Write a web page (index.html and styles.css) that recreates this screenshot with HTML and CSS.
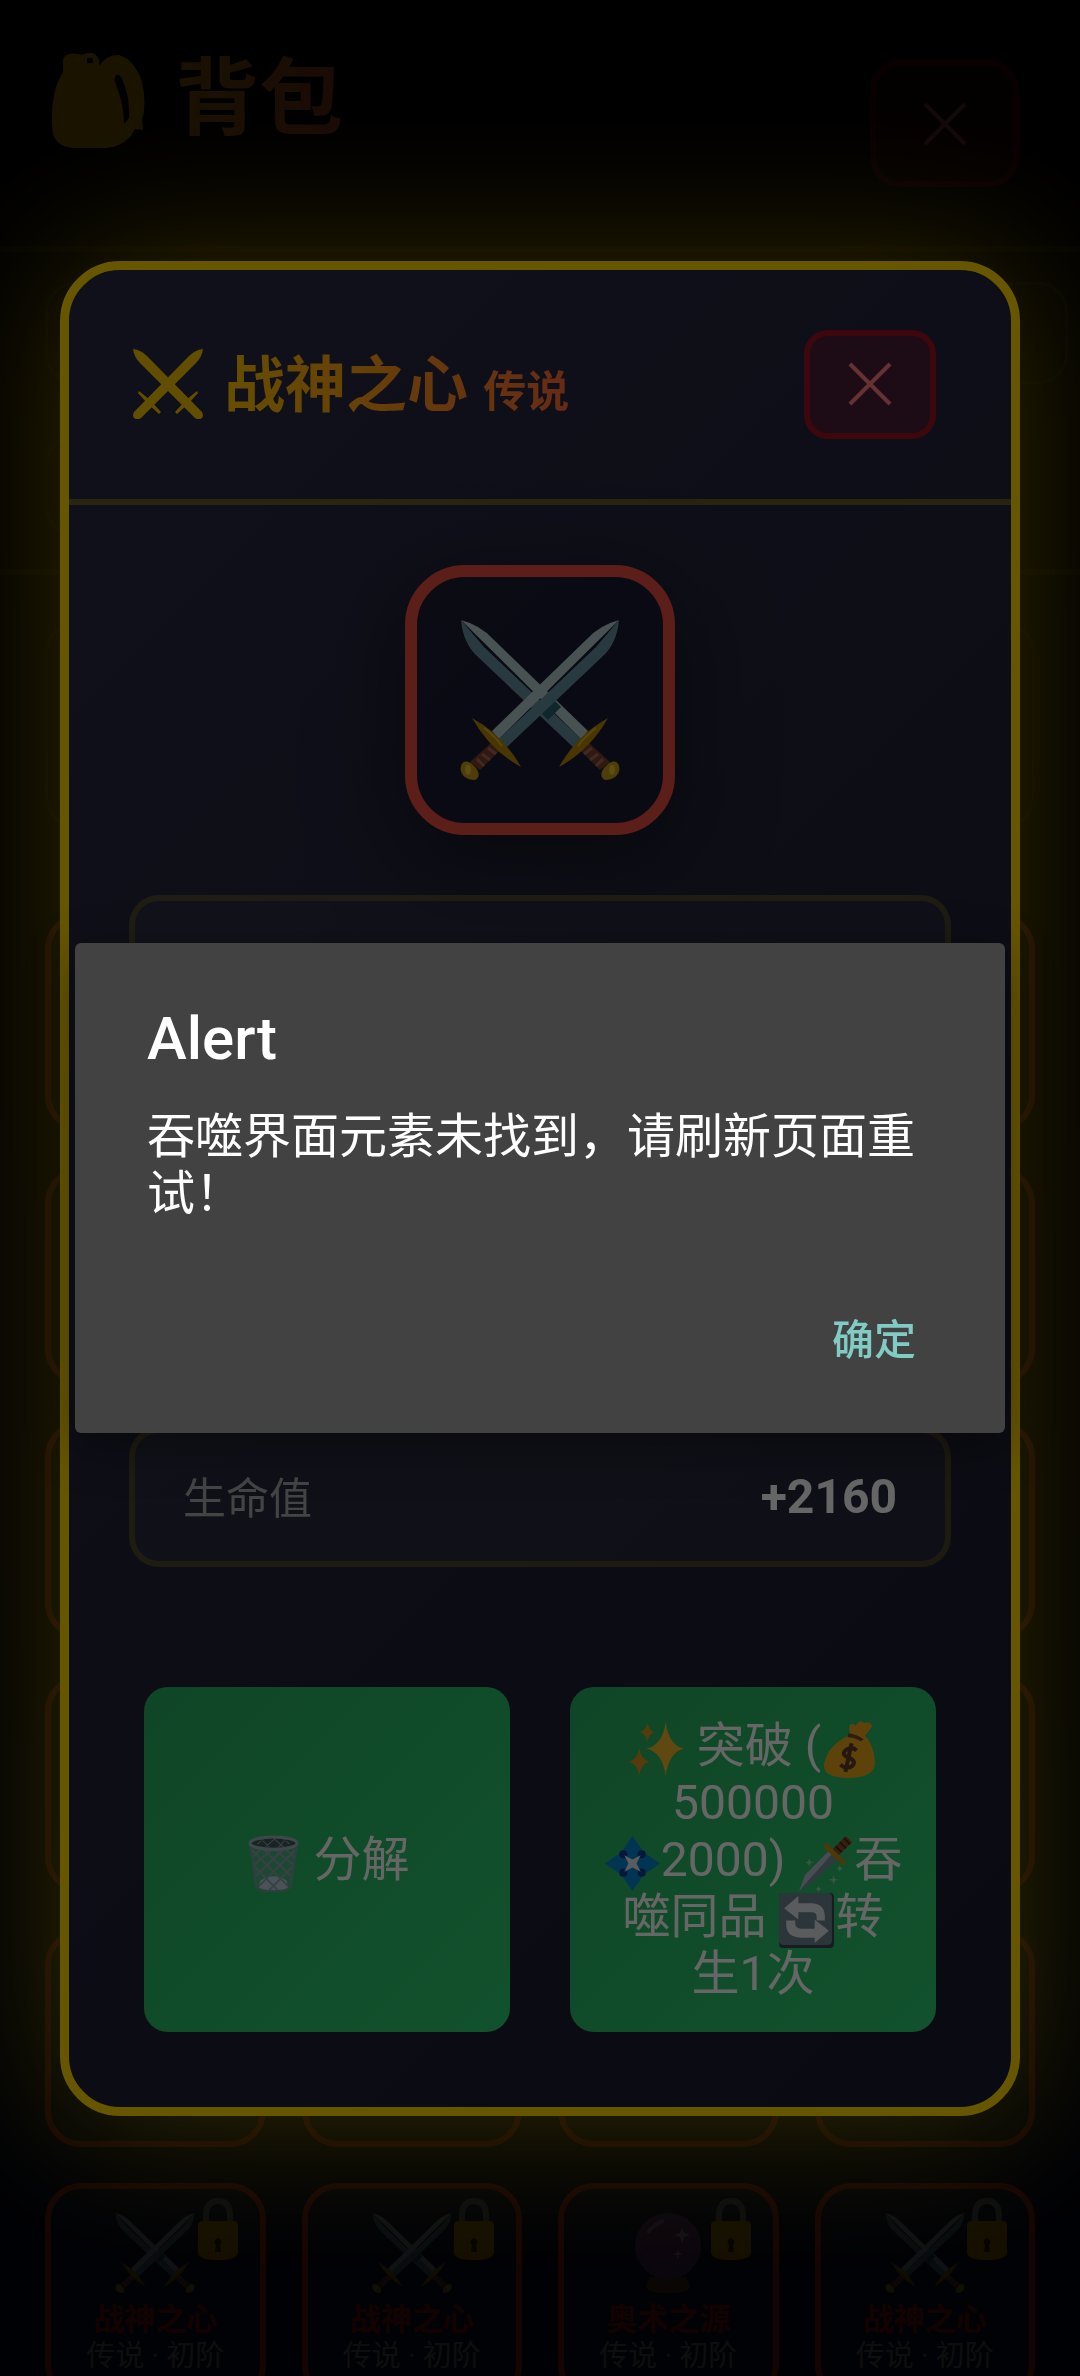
FILE: index.html
```html
<!DOCTYPE html>
<html lang="zh-CN">
<head>
<meta charset="utf-8">
<meta name="viewport" content="width=device-width">
<title>背包</title>
<link rel="stylesheet" href="styles.css">
</head>

<body>
<svg class="defs" aria-hidden="true">
	<defs>
		<g id="sword">
			<path d="M159 0Q140 5 127 19L32 111L39 119Z" fill="#b4cdcd"/>
			<path d="M159 0Q157 23 143 36L46 128L39 119L136 27Z" fill="#6590a0"/>
			<path d="M32 122L40 130L20 150L10 142Z" fill="#7a3f2e"/>
			<path d="M28 128L36 134M22 134L30 140M17 139L24 146" stroke="#a5695a" stroke-width="3"/>
			<path d="M12 98Q43 115 61 147Q30 130 12 98Z" fill="#b98708"/>
			<path d="M24 108Q34 115 42 126" stroke="#e0b41c" stroke-width="2" fill="none"/>
			<path d="M1 146C3 139 10 141 14 146C20 151 20 158 15 160C6 160 -1 154 1 146Z" fill="#c29a14"/>
			<ellipse cx="8" cy="150" rx="3" ry="5" fill="#e3c134"/>
		</g>
		<symbol id="swords" viewBox="0 0 160 160">
			<use href="#sword" transform="translate(160) scale(-1 1)"/>
			<path d="M94 80L101 87L88 100L81 93Z" fill="#25616c"/>
			<use href="#sword"/>
		</symbol>
		<g id="sword-flat">
			<path d="M70 0Q69 8 63 14L10 67Q7 71 3 70Q0 69 0 66Q0 63 3 61L56 7Q62 1 70 0Z"/>
			<path d="M6 42L17 51L28 63L26 65L14 54L5 44Z"/>
		</g>
		<symbol id="swords-flat" viewBox="0 0 70 70">
			<use href="#sword-flat"/>
			<use href="#sword-flat" transform="translate(70) scale(-1 1)"/>
		</symbol>
		<symbol id="backpack" viewBox="0 0 94 96">
			<path fill-rule="evenodd" d="M12 20V8Q14 0 27 2Q31 3 33 2Q44 -2 48 8V14Q56 2 68 3Q84 8 91 30Q96 52 91 68L92 78L84 77L80 84Q70 95 55 96H22Q6 95 2 82Q-1 60 4 38Q8 26 12 20ZM36 6V11H42V6ZM65 23Q63 25 64 30Q73 52 73 72L78 66Q79 44 71 27Q68 21 65 23Z"/>
		</symbol>
		<symbol id="lock" viewBox="0 0 42 62">
			<path d="M9 26V16Q10 3 21 3Q32 3 33 16V26" fill="none" stroke="#78909c" stroke-width="6"/>
			<path d="M1 27Q1 23 6 23H36Q41 23 41 27V54Q41 62 21 62Q1 62 1 54Z" fill="#e0a400"/>
			<path d="M21 40A4 4 0 0 1 23 47L24 54H18L19 47A4 4 0 0 1 21 40Z" fill="#3e2a00"/>
		</symbol>
		<symbol id="orb" viewBox="0 0 80 80">
			<path d="M22 64H58L62 74Q60 80 40 80Q20 80 18 74Z" fill="#7a4a2c"/>
			<circle cx="40" cy="33" r="33" fill="#7e4a96"/>
			<circle cx="36" cy="28" r="22" fill="#8e2f8c" opacity=".6"/>
			<path d="M20 20Q26 10 36 8" stroke="#cfa5dc" stroke-width="4" fill="none"/>
			<path d="M54 14L56 20L62 22L56 24L54 30L52 24L46 22L52 20ZM50 36L51 40L55 41L51 42L50 46L49 42L45 41L49 40Z" fill="#e3cdf0"/>
		</symbol>
		<symbol id="trash" viewBox="0 0 56 56">
			<path d="M5 8L11 50Q12 56 28 56Q44 56 45 50L51 8Z" fill="#90a4ae" opacity=".3"/>
			<path d="M15 45Q28 36 41 45L42 52Q28 58 14 52Z" fill="#b8cfdc"/>
			<path d="M6 14L42 50M8 30L32 54M16 12L45 40M28 13L48 30M38 12L49 22M50 14L14 50M48 30L24 54M40 12L11 40M28 13L8 30M18 12L7 22" stroke="#8ba2ae" stroke-width="2"/>
			<path d="M5 8L11 50Q12 55 28 55Q44 55 45 50L51 8" fill="none" stroke="#7d97a5" stroke-width="2"/>
			<ellipse cx="28" cy="8" rx="23" ry="6" fill="#3d5a54" stroke="#9db2bd" stroke-width="3"/>
			<path d="M12 9L18 4M20 12L30 3M32 13L40 4M16 4L24 12M28 3L38 12M38 4L44 9" stroke="#8ba2ae" stroke-width="1"/>
		</symbol>
		<symbol id="sparkles" viewBox="0 0 56 56">
			<path d="M37 1Q40 24 55 27Q40 31 37 54Q34 31 18 27Q34 24 37 1Z" fill="#f0b42c"/>
			<path d="M11 27Q13 38 21 40Q13 42 11 53Q9 42 1 40Q9 38 11 27ZM19 2Q21 10 26 11Q21 12 19 20Q17 12 12 11Q17 10 19 2Z" fill="#dc9520"/>
		</symbol>
		<symbol id="money" viewBox="0 0 56 56">
			<path d="M28 13L28 4Q32 1 34 5Q38 -2 42 2Q50 0 50 6L41 17Z" fill="#eda420"/>
			<path d="M28 14H43Q52 24 53 40Q54 55 28 56Q2 56 3 43Q6 24 28 14Z" fill="#e9a91b"/>
			<path d="M27 12Q35 13 42 18L39 20Q33 16 26 16Z" fill="#73482d"/>
			<path d="M35 29Q31 25 25 28Q19 33 27 36Q35 39 31 44Q25 48 19 43M30 22L24 50" stroke="#5d3e28" stroke-width="4" fill="none"/>
		</symbol>
		<symbol id="gem" viewBox="0 0 56 56">
			<path d="M28 1Q34 19 55 28Q35 35 28 55Q21 35 1 28Q22 19 28 1Z" fill="#0288d1"/>
			<path d="M28 1L39 17L28 24L17 17ZM1 28L17 17L24 28L17 39ZM55 28L39 17L32 28L39 39ZM28 55L17 39L28 32L39 39Z" fill="#0585cd"/>
			<g fill="#113d8e"><circle cx="19" cy="19" r="4"/><circle cx="37" cy="19" r="4"/><circle cx="19" cy="37" r="4"/><circle cx="37" cy="37" r="4"/></g>
			<path d="M20 20L28 24L36 20L32 28L36 36L28 32L20 36L24 28Z" fill="#e1e5e8"/>
		</symbol>
		<symbol id="dagger" viewBox="0 0 56 56">
			<path d="M2 55L8 39L32 15L40 23L16 46Z" fill="#78909c"/>
			<path d="M2 55L8 39L32 15L35 18Z" fill="#b0c4cc"/>
			<path d="M35 14L48 1L54 7L41 20Z" fill="#8d4a2b"/>
			<path d="M38 11L44 17M42 7L48 13M46 3L52 9" stroke="#4e2a1c" stroke-width="2"/>
			<path d="M26 9L30 9L47 25L47 30L43 28L27 13Z" fill="#c48a14"/>
			<path d="M12 23l1 3 3 1-3 1-1 3-1-3-3-1 3-1ZM36 39l1 4 4 1-4 1-1 4-1-4-4-1 4-1ZM21 50l1 2 2 1-2 1-1 2-1-2-2-1 2-1ZM42 30l1 2 2 1-2 1-1 2-1-2-2-1 2-1Z" fill="#8fd6b0"/>
		</symbol>
		<symbol id="cycle" viewBox="0 0 56 56">
			<rect x="1" y="1" width="54" height="54" rx="4" fill="#37474f"/>
			<rect x="1" y="1" width="52" height="51" rx="4" fill="#6f8490"/>
			<path d="M6 16L20 4V11H34Q46 12 46 24V28H38V25Q38 20 33 20H20V27ZM50 38L36 50V45H22Q8 44 8 32V28H17V31Q17 36 23 36H36V27Z" fill="#dfe3e5"/>
		</symbol>
		<symbol id="cross" viewBox="0 0 44 44">
			<path d="M2 2L42 42M42 2L2 42" stroke="currentColor" stroke-width="4"/>
		</symbol>
	</defs>
</svg>

<div class="bag">
	<header class="bag-header">
		<h1 class="bag-title"><svg class="bag-icon"><use href="#backpack"/></svg>背包</h1>
		<button class="close bag-close" aria-label="关闭背包"><svg class="cross"><use href="#cross"/></svg></button>
	</header>
	<div class="filters">
		<div class="filter"></div>
		<div class="filter filter-short"></div>
	</div>
	<div class="bag-body">
		<div class="summary"></div>
		<div class="grid">
			<div class="card"></div><div class="card"></div><div class="card"></div><div class="card"></div>
			<div class="card"></div><div class="card"></div><div class="card"></div><div class="card"></div>
			<div class="card"></div><div class="card"></div><div class="card"></div><div class="card"></div>
			<div class="card"></div><div class="card"></div><div class="card"></div><div class="card"></div>
			<div class="card"></div><div class="card"></div><div class="card"></div><div class="card"></div>
			<div class="card">
				<svg class="card-icon"><use href="#swords"/></svg>
				<svg class="card-lock"><use href="#lock"/></svg>
				<div class="card-name">战神之心</div>
				<div class="card-rank">传说 · 初阶</div>
			</div>
			<div class="card">
				<svg class="card-icon"><use href="#swords"/></svg>
				<svg class="card-lock"><use href="#lock"/></svg>
				<div class="card-name">战神之心</div>
				<div class="card-rank">传说 · 初阶</div>
			</div>
			<div class="card">
				<svg class="card-icon"><use href="#orb"/></svg>
				<svg class="card-lock"><use href="#lock"/></svg>
				<div class="card-name">奥术之源</div>
				<div class="card-rank">传说 · 初阶</div>
			</div>
			<div class="card">
				<svg class="card-icon"><use href="#swords"/></svg>
				<svg class="card-lock"><use href="#lock"/></svg>
				<div class="card-name">战神之心</div>
				<div class="card-rank">传说 · 初阶</div>
			</div>
		</div>
	</div>
</div>

<div class="overlay item-overlay">
	<section class="item">
		<header class="item-header">
			<svg class="item-mark"><use href="#swords-flat"/></svg>
			<h2 class="item-title">战神之心 <small class="item-quality">传说</small></h2>
			<button class="close" aria-label="关闭"><svg class="cross"><use href="#cross"/></svg></button>
		</header>
		<div class="item-body">
			<div class="item-frame"><svg class="item-icon"><use href="#swords"/></svg></div>
			<div class="panel panel-info"></div>
			<div class="panel stat"><span class="stat-name">生命值</span><span class="stat-value">+2160</span></div>
			<div class="actions">
				<button class="action"><svg class="emoji"><use href="#trash"/></svg> 分解</button>
				<button class="action"><svg class="emoji"><use href="#sparkles"/></svg> 突破 (<svg class="emoji"><use href="#money"/></svg><br>500000<br><svg class="emoji"><use href="#gem"/></svg>2000) <svg class="emoji"><use href="#dagger"/></svg>吞<br>噬同品 <svg class="emoji"><use href="#cycle"/></svg>转<br>生1次</button>
			</div>
		</div>
	</section>
</div>

<div class="overlay alert-overlay">
	<div class="alert" role="alertdialog" aria-labelledby="alert-title" aria-describedby="alert-text">
		<h2 class="alert-title" id="alert-title">Alert</h2>
		<p class="alert-text" id="alert-text">吞噬界面元素未找到，请刷新页面重试！</p>
		<div class="alert-buttons"><button class="alert-ok">确定</button></div>
	</div>
</div>
</body>
</html>
```

FILE: styles.css
```css
* { box-sizing: border-box; }
body { margin: 0; height: 100vh; overflow: hidden; background: #000; color: #fff; font-family: Roboto, "Noto Sans CJK SC", sans-serif; font-size: 48px; }
h1, h2, p { margin: 0; }
button { font-family: inherit; color: inherit; cursor: pointer; }
.defs { position: absolute; width: 0; height: 0; }

/* bag page */
.bag { height: 100vh; overflow: hidden; background: linear-gradient(#000, #06102e); }
.bag-header { display: flex; justify-content: space-between; align-items: flex-start; height: 252px; padding: 52px 61px 0 51px; border-bottom: 6px solid rgba(255, 215, 0, 0.15); }
.bag-title { display: flex; align-items: center; gap: 30px; font-size: 84px; line-height: 84px; font-weight: 700; background: linear-gradient(90deg, #ffd700, #ff6b35); -webkit-background-clip: text; background-clip: text; color: transparent; }
.bag-icon { width: 94px; height: 96px; fill: #f0bc00; }
.filters { display: grid; gap: 51px; height: 323px; padding: 30px 12px 33px 45px; border-bottom: 6px solid rgba(255, 215, 0, 0.15); }
.filter { border: 3px solid rgba(255, 255, 255, 0.12); border-radius: 30px; }
.filter-short { margin-right: 120px; }
.bag-body { padding: 48px 45px; }
.summary { height: 204px; margin-bottom: 86px; border: 3px solid rgba(255, 215, 0, 0.15); border-radius: 30px; }
.grid { display: grid; grid-template-columns: repeat(4, 1fr); gap: 36px; }
.card { position: relative; display: flex; flex-direction: column; align-items: center; height: 218px; padding-top: 24px; border: 6px solid #d0381c; border-radius: 36px; background: rgba(255, 255, 255, 0.05); }
.card-icon { width: 80px; height: 80px; margin-bottom: 9px; opacity: 0.8; }
.card-lock { position: absolute; top: 9px; right: 21px; width: 42px; height: 62px; opacity: 0.9; }
.card-name { font-size: 31px; line-height: 36px; font-weight: 700; color: #b01812; }
.card-rank { font-size: 29px; line-height: 36px; color: #888; }

.close { display: flex; align-items: center; justify-content: center; flex: none; width: 132px; height: 109px; padding: 0; border: 6px solid rgba(195, 10, 24, 0.75); border-radius: 24px; background: rgba(220, 10, 40, 0.2); background-clip: padding-box; color: #ff7b7b; }
.bag-close { width: 149px; height: 127px; margin-top: 8px; border-radius: 30px; opacity: 0.7; }
.cross { width: 44px; height: 44px; }

.overlay { position: fixed; top: 0; right: 0; bottom: 0; left: 0; display: flex; align-items: center; justify-content: center; }

/* item details */
.item-overlay { padding: 0 60px; background: rgba(0, 0, 0, 0.75); }
.item { width: 100%; border: 9px solid #ffd700; border-radius: 60px; background: linear-gradient(135deg, #2a2a44, #1a1a2e); background-clip: padding-box; box-shadow: 0 0 150px rgba(255, 215, 0, 0.5); }
.item-header { display: flex; align-items: center; padding: 60px 75px 60px 64px; border-bottom: 6px solid rgba(255, 215, 0, 0.3); }
.item-mark { width: 70px; height: 70px; margin-right: 21px; fill: #f5c400; }
.item-title { margin-right: auto; padding-top: 9px; font-size: 61px; line-height: 72px; font-weight: 700; background: linear-gradient(90deg, #ffc400, #ff6b35); -webkit-background-clip: text; background-clip: text; color: transparent; }
.item-quality { font-size: 43px; }
.item-body { padding: 60px; }
.item-frame { display: flex; align-items: center; justify-content: center; width: 270px; height: 270px; margin: 0 auto 60px; border: 12px solid #e74c3c; border-radius: 60px; background: rgba(0, 0, 20, 0.25); box-shadow: 0 24px 90px rgba(0, 0, 0, 0.5); }
.item-icon { width: 160px; height: 160px; }
.panel { border: 6px solid rgba(255, 215, 0, 0.2); border-radius: 30px; background: rgba(255, 255, 255, 0.04); background-clip: padding-box; }
.panel-info { height: 502px; margin-bottom: 30px; }
.stat { display: flex; align-items: center; justify-content: space-between; height: 140px; padding: 0 48px; }
.stat-name { padding-bottom: 3px; font-size: 43px; color: #aaa; }
.stat-value { font-weight: 700; }
.actions { display: grid; grid-template-columns: 1fr 1fr; gap: 60px; margin: 120px 15px 15px; }
.action { padding: 30px 15px; border: 0; border-radius: 24px; background: linear-gradient(135deg, #27ae60, #2ecc71); font-size: 48px; line-height: 57px; }
.emoji { width: 57px; height: 57px; margin: -6px 0; vertical-align: -10px; }

/* system dialog */
.alert-overlay { padding: 0 75px; background: rgba(0, 0, 0, 0.6); }
.alert { width: 100%; padding: 61px 72px 43px; border-radius: 6px; background: #424242; box-shadow: 0 12px 48px rgba(0, 0, 0, 0.4); }
.alert-title { margin-bottom: 34px; font-size: 60px; line-height: 70px; font-weight: 500; }
.alert-text { line-height: 57px; }
.alert-buttons { display: flex; justify-content: flex-end; margin-top: 60px; }
.alert-ok { height: 108px; padding: 0 17px; border: 0; background: none; font-size: 42px; font-weight: 500; color: #80cbc4; }
```
